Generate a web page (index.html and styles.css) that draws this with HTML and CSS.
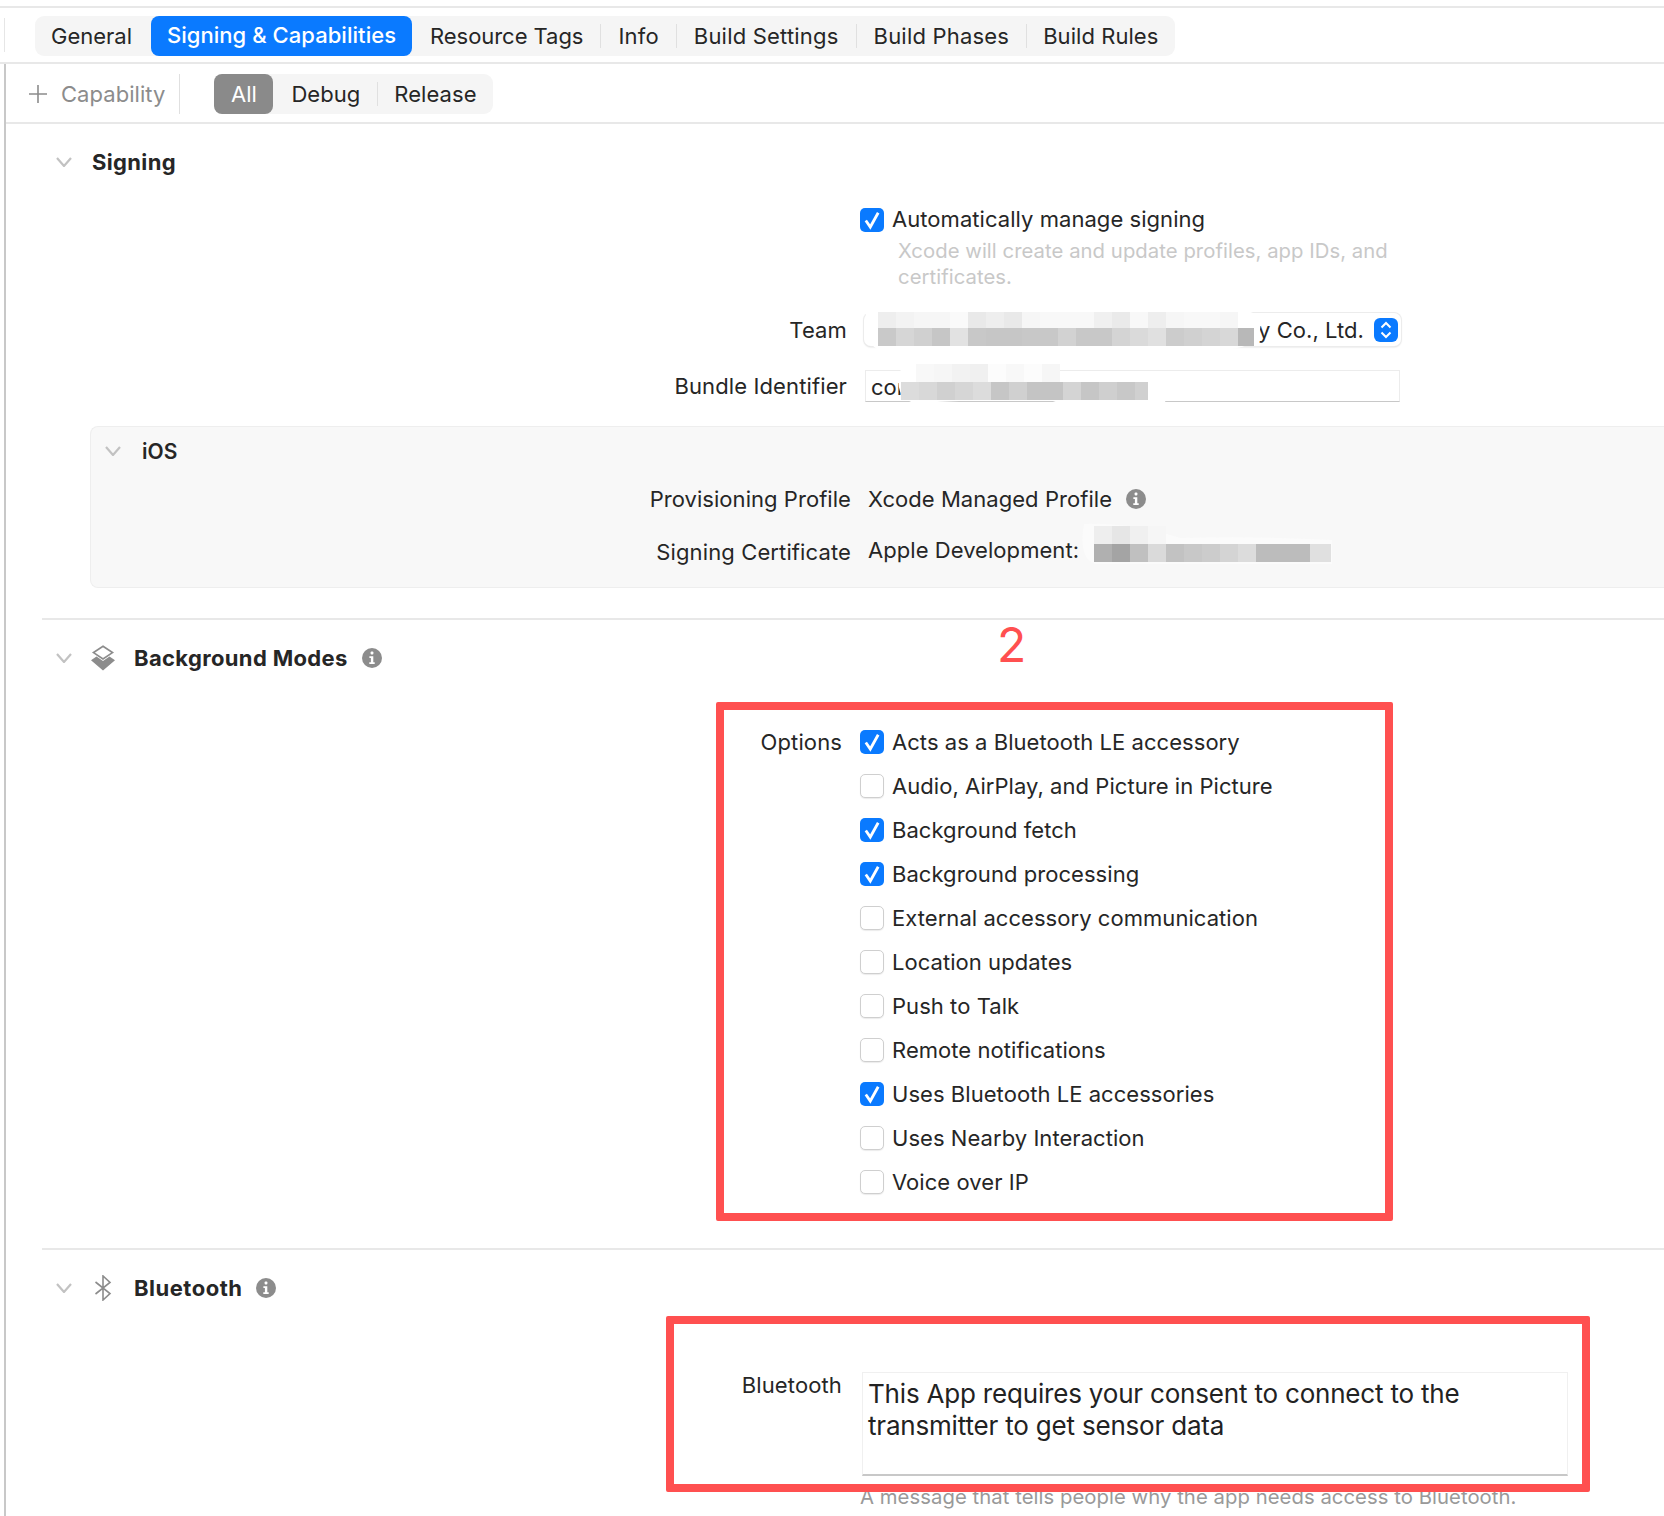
FILE: index.html
```html
<!DOCTYPE html>
<html lang="en">
<head>
<meta charset="utf-8">
<title>Signing &amp; Capabilities</title>
<link rel="stylesheet" href="styles.css">
</head>
<body>
<svg class="defs" width="0" height="0" aria-hidden="true">
  <symbol id="chev" viewBox="0 0 16 10"><polyline points="1,1 8,9 15,1" fill="none" stroke="#c2c2c2" stroke-width="2.200"/></symbol>
  <symbol id="info" viewBox="0 0 20 20"><circle cx="10" cy="10" r="10" fill="#8c8c8c"/><rect x="8.600" y="3.600" width="2.800" height="2.800" rx="1" fill="#fff"/><path d="M7.400 8.200h3.900v6h1.400v1.800H7.300v-1.800h1.600V10H7.400z" fill="#fff"/></symbol>
  <symbol id="tick" viewBox="0 0 24 24"><rect width="24" height="24" rx="5" fill="#0a7aff"/><polyline points="5.800,12.500 10.300,19 18.200,4.800" fill="none" stroke="#fff" stroke-width="2.800"/></symbol>
</svg>
<div class="page">
  <header class="tabrow">
    <i class="rail"></i>
    <nav class="tabs">
      <span class="tab tab-first">General</span>
      <span class="tab tab-on">Signing &amp; Capabilities</span>
      <span class="tab tab-res">Resource Tags</span><i class="sep"></i>
      <span class="tab">Info</span><i class="sep"></i>
      <span class="tab">Build Settings</span><i class="sep"></i>
      <span class="tab">Build Phases</span><i class="sep"></i>
      <span class="tab tab-last">Build Rules</span>
    </nav>
  </header>
  <main class="main">
    <div class="subbar">
      <svg class="plus" width="18" height="18" viewBox="0 0 18 18"><path d="M9 0v18M0 9h18" stroke="#8c8c8c" stroke-width="1.600"/></svg>
      <span class="cap">Capability</span>
      <i class="cap-sep"></i>
      <div class="seg">
        <span class="seg-all">All</span>
        <span class="seg-item seg-debug">Debug</span><i class="sep"></i>
        <span class="seg-item seg-release">Release</span>
      </div>
    </div>

    <section class="signing">
      <div class="head"><svg class="chev" width="16" height="10"><use href="#chev"/></svg><h2 class="title title-plain">Signing</h2></div>
      <div class="row row-auto">
        <span></span>
        <label class="check check-auto"><svg class="box" width="24" height="24"><use href="#tick"/></svg><span>Automatically manage signing</span></label>
      </div>
      <p class="hint">Xcode will create and update profiles, app IDs, and certificates.</p>
      <div class="row row-team">
        <span class="label label-team">Team</span>
        <div class="popup"><span class="popup-text">y Co., Ltd.</span>
          <svg class="stepper" width="24" height="24" viewBox="0 0 24 24"><rect width="24" height="24" rx="6" fill="#0a7aff"/><path d="M7.500 9.500 12 5l4.500 4.500M7.500 14.500 12 19l4.500-4.500" fill="none" stroke="#fff" stroke-width="2"/></svg>
        </div>
      </div>
      <div class="row row-bundle">
        <span class="label">Bundle Identifier</span>
        <div class="field">com</div>
      </div>
      <div class="ios">
        <div class="ios-head"><svg class="chev" width="16" height="10"><use href="#chev"/></svg><h3 class="ios-title">iOS</h3></div>
        <div class="ios-row ios-row-prof">
          <span class="label">Provisioning Profile</span>
          <span class="value">Xcode Managed Profile<svg class="info info-prof" width="20" height="20"><use href="#info"/></svg></span>
        </div>
        <div class="ios-row ios-row-cert">
          <span class="label">Signing Certificate</span>
          <span class="value value-up">Apple Development:</span>
        </div>
      </div>
    </section>

    <hr class="rule rule-bg">

    <section class="modes">
      <div class="head"><svg class="chev" width="16" height="10"><use href="#chev"/></svg>
        <svg class="sec-icon" width="26" height="26" viewBox="0 0 26 26"><path d="M13 1.200 22.500 7.600 13 14 3.500 7.600z" fill="none" stroke="#8c8c8c" stroke-width="1.700"/><path d="M6.500 11.500 13 16 19.500 11.500 25 15.200 13 25.500 1 15.200z" fill="#8c8c8c"/></svg>
        <h2 class="title">Background Modes</h2><svg class="info" width="20" height="20"><use href="#info"/></svg></div>
      <div class="options">
        <div class="row row-opt"><span class="label label-opt">Options</span><label class="check"><svg class="box" width="24" height="24"><use href="#tick"/></svg><span>Acts as a Bluetooth LE accessory</span></label></div>
        <div class="row row-opt"><span></span><label class="check"><i class="box box-off"></i><span>Audio, AirPlay, and Picture in Picture</span></label></div>
        <div class="row row-opt"><span></span><label class="check"><svg class="box" width="24" height="24"><use href="#tick"/></svg><span>Background fetch</span></label></div>
        <div class="row row-opt"><span></span><label class="check"><svg class="box" width="24" height="24"><use href="#tick"/></svg><span>Background processing</span></label></div>
        <div class="row row-opt"><span></span><label class="check"><i class="box box-off"></i><span>External accessory communication</span></label></div>
        <div class="row row-opt"><span></span><label class="check"><i class="box box-off"></i><span>Location updates</span></label></div>
        <div class="row row-opt"><span></span><label class="check"><i class="box box-off"></i><span>Push to Talk</span></label></div>
        <div class="row row-opt"><span></span><label class="check"><i class="box box-off"></i><span>Remote notifications</span></label></div>
        <div class="row row-opt"><span></span><label class="check"><svg class="box" width="24" height="24"><use href="#tick"/></svg><span>Uses Bluetooth LE accessories</span></label></div>
        <div class="row row-opt"><span></span><label class="check"><i class="box box-off"></i><span>Uses Nearby Interaction</span></label></div>
        <div class="row row-opt"><span></span><label class="check"><i class="box box-off"></i><span>Voice over IP</span></label></div>
      </div>
    </section>

    <hr class="rule rule-bt">

    <section class="bluetooth">
      <div class="head"><svg class="chev" width="16" height="10"><use href="#chev"/></svg>
        <svg class="sec-icon sec-icon-bt" width="18" height="26" viewBox="0 0 18 26"><path d="M1.500 7 16 18.500 9 25V1L16 7.500 1.500 19" fill="none" stroke="#8c8c8c" stroke-width="1.600"/></svg>
        <h2 class="title">Bluetooth</h2><svg class="info" width="20" height="20"><use href="#info"/></svg></div>
      <div class="row row-bt">
        <span class="label label-opt">Bluetooth</span>
        <div class="usage">This App requires your consent to connect to the transmitter to get sensor data</div>
      </div>
      <p class="help">A message that tells people why the app needs access to Bluetooth.</p>
    </section>
  </main>

  <svg class="redact" width="1664" height="1516" viewBox="0 0 1664 1516" shape-rendering="crispEdges">
    <g shape-rendering="auto" fill="#fff">
      <path d="M866 310H1240Q1268 312 1258 336Q1250 352 1200 350H880Q864 346 866 310z"/>
      <path d="M902 366Q940 356 1010 360Q1050 372 1105 382Q1170 390 1165 404Q1160 420 1120 416Q1080 412 1050 400Q940 400 920 404Q890 400 902 366z"/>
      <path d="M1084 524Q1130 522 1180 538Q1260 536 1332 540V564H1095Q1078 558 1084 524z" fill="#fbfbfb"/>
    </g>
    <g>
      <rect x="878" y="312" width="18" height="16" fill="#eee"/><rect x="896" y="312" width="18" height="16" fill="#f3f3f3"/><rect x="914" y="312" width="18" height="16" fill="#f6f6f6"/><rect x="932" y="312" width="18" height="16" fill="#f6f6f6"/><rect x="950" y="312" width="18" height="16" fill="#fafafa"/><rect x="968" y="312" width="18" height="16" fill="#e9e9e9"/><rect x="986" y="312" width="18" height="16" fill="#eee"/><rect x="1004" y="312" width="18" height="16" fill="#e9e9e9"/><rect x="1022" y="312" width="18" height="16" fill="#f6f6f6"/><rect x="1040" y="312" width="18" height="16" fill="#f8f8f8"/><rect x="1058" y="312" width="18" height="16" fill="#f8f8f8"/><rect x="1076" y="312" width="18" height="16" fill="#f8f8f8"/><rect x="1094" y="312" width="18" height="16" fill="#f0f0f0"/><rect x="1112" y="312" width="18" height="16" fill="#eaeaea"/><rect x="1130" y="312" width="18" height="16" fill="#f8f8f8"/><rect x="1148" y="312" width="18" height="16" fill="#eee"/><rect x="1166" y="312" width="18" height="16" fill="#f6f6f6"/><rect x="1184" y="312" width="18" height="16" fill="#f8f8f8"/><rect x="1202" y="312" width="18" height="16" fill="#f8f8f8"/><rect x="1220" y="312" width="18" height="16" fill="#f6f6f6"/>
      <rect x="878" y="328" width="18" height="18" fill="#c9c9c9"/><rect x="896" y="328" width="18" height="18" fill="#d6d6d6"/><rect x="914" y="328" width="18" height="18" fill="#d0d0d0"/><rect x="932" y="328" width="18" height="18" fill="#c6c6c6"/><rect x="950" y="328" width="18" height="18" fill="#e2e2e2"/><rect x="968" y="328" width="18" height="18" fill="#c8c8c8"/><rect x="986" y="328" width="18" height="18" fill="#c6c6c6"/><rect x="1004" y="328" width="18" height="18" fill="#c6c6c6"/><rect x="1022" y="328" width="18" height="18" fill="#c8c8c8"/><rect x="1040" y="328" width="18" height="18" fill="#c8c8c8"/><rect x="1058" y="328" width="18" height="18" fill="#d2d2d2"/><rect x="1076" y="328" width="18" height="18" fill="#c8c8c8"/><rect x="1094" y="328" width="18" height="18" fill="#c8c8c8"/><rect x="1112" y="328" width="18" height="18" fill="#d4d4d4"/><rect x="1130" y="328" width="18" height="18" fill="#dadada"/><rect x="1148" y="328" width="18" height="18" fill="#e0e0e0"/><rect x="1166" y="328" width="18" height="18" fill="#ccc"/><rect x="1184" y="328" width="18" height="18" fill="#d0d0d0"/><rect x="1202" y="328" width="18" height="18" fill="#d4d4d4"/><rect x="1220" y="328" width="18" height="18" fill="#d8d8d8"/><rect x="1238" y="328" width="16" height="18" fill="#b8b8b8"/>
      <rect x="916" y="364" width="18" height="18" fill="#f8f8f8"/><rect x="934" y="364" width="18" height="18" fill="#f6f6f6"/><rect x="952" y="364" width="18" height="18" fill="#f2f2f2"/><rect x="970" y="364" width="18" height="18" fill="#f0f0f0"/><rect x="988" y="364" width="18" height="18" fill="#fcfcfc"/><rect x="1006" y="364" width="18" height="18" fill="#f8f8f8"/><rect x="1024" y="364" width="18" height="18" fill="#fcfcfc"/><rect x="1042" y="364" width="18" height="18" fill="#f6f6f6"/>
      <rect x="901" y="382" width="18" height="18" fill="#dcdcdc"/><rect x="919" y="382" width="18" height="18" fill="#d8d8d8"/><rect x="937" y="382" width="18" height="18" fill="#d0d0d0"/><rect x="955" y="382" width="18" height="18" fill="#d6d6d6"/><rect x="973" y="382" width="18" height="18" fill="#dcdcdc"/><rect x="991" y="382" width="18" height="18" fill="#c6c6c6"/><rect x="1009" y="382" width="18" height="18" fill="#d0d0d0"/><rect x="1027" y="382" width="18" height="18" fill="#c4c4c4"/><rect x="1045" y="382" width="18" height="18" fill="#c4c4c4"/><rect x="1063" y="382" width="18" height="18" fill="#d4d4d4"/><rect x="1081" y="382" width="18" height="18" fill="#c6c6c6"/><rect x="1099" y="382" width="18" height="18" fill="#cfcfcf"/><rect x="1117" y="382" width="18" height="18" fill="#c8c8c8"/><rect x="1135" y="382" width="13" height="18" fill="#d0d0d0"/>
      <rect x="1094" y="526" width="18" height="18" fill="#eee"/><rect x="1112" y="526" width="18" height="18" fill="#e6e6e6"/><rect x="1130" y="526" width="18" height="18" fill="#f0f0f0"/><rect x="1148" y="526" width="18" height="18" fill="#f6f6f6"/>
      <rect x="1094" y="544" width="18" height="18" fill="#b0b0b0"/><rect x="1112" y="544" width="18" height="18" fill="#a4a4a4"/><rect x="1130" y="544" width="18" height="18" fill="#c0c0c0"/><rect x="1148" y="544" width="18" height="18" fill="#dadada"/><rect x="1166" y="544" width="18" height="18" fill="#c2c2c2"/><rect x="1184" y="544" width="18" height="18" fill="#c8c8c8"/><rect x="1202" y="544" width="18" height="18" fill="#ccc"/><rect x="1220" y="544" width="18" height="18" fill="#d4d4d4"/><rect x="1238" y="544" width="18" height="18" fill="#dcdcdc"/><rect x="1256" y="544" width="18" height="18" fill="#bcbcbc"/><rect x="1274" y="544" width="18" height="18" fill="#bcbcbc"/><rect x="1292" y="544" width="18" height="18" fill="#bcbcbc"/><rect x="1310" y="544" width="21" height="18" fill="#e0e0e0"/>
    </g>
  </svg>
  <span class="step-num">2</span>
  <div class="mark mark-options"></div>
  <div class="mark mark-bluetooth"></div>
</div>
</body>
</html>
```

FILE: styles.css
```css
* { box-sizing: border-box; }
html, body { margin: 0; padding: 0; background: #fff; }
body { font-family: Inter, "Liberation Sans", sans-serif; font-size: 22px; color: #262626; letter-spacing: .05px; }
.defs { position: absolute; }
.page { position: relative; width: 1664px; height: 1516px; overflow: hidden; }

.tabrow { margin-top: 6px; height: 58px; border-top: 2px solid #e8e8e8; border-bottom: 2px solid #e8e8e8; padding: 8px 0 0 4px; display: flex; align-items: flex-start; }
.rail { width: 1px; height: 34px; margin: 2px 30px 0 0; background: #e6e6e6; flex: none; }
.tabs { display: inline-flex; align-items: center; height: 40px; background: #f5f5f5; border-radius: 9px; }
.tab { padding: 0 17px; white-space: nowrap; letter-spacing: .2px; }
.tab-first { padding: 0 19px 0 16px; letter-spacing: 0; }
.tab-on { width: 261px; height: 40px; line-height: 38px; padding: 0; text-align: center; background: #0a7aff; color: #fff; border-radius: 8px; font-weight: 500; letter-spacing: .05px; }
.tab-res { padding-left: 18px; letter-spacing: -.05px; }
.tab-last { padding-left: 16px; letter-spacing: .05px; }
.sep { display: block; width: 1px; height: 24px; background: #e0e0e0; flex: none; }

.main { margin-left: 4px; padding-left: 1px; border-left: 2px solid #c8c8c8; height: 1452px; }
.subbar { height: 60px; margin-left: -1px; padding-left: 1px; border-bottom: 2px solid #e8e8e8; display: flex; align-items: flex-start; padding-top: 10px; }
.plus { margin: 11px 0 0 22px; flex: none; }
.cap { margin-left: 14px; line-height: 40px; color: #8c8c8c; }
.cap-sep { width: 1px; height: 40px; background: #e0e0e0; margin-left: 14px; }
.seg { display: flex; align-items: center; height: 40px; margin-left: 34px; background: #f5f5f5; border-radius: 9px; padding-right: 16px; }
.seg-all { width: 59px; height: 40px; line-height: 40px; text-align: center; background: #8a8a8a; color: #fff; border-radius: 8px; }
.seg-item { white-space: nowrap; }
.seg-debug { padding: 0 17px 0 18px; }
.seg-release { padding-left: 16px; }

.signing { padding-top: 18px; }
.head { display: flex; align-items: center; height: 40px; padding-left: 49px; }
.chev { flex: none; }
.title { margin: 0 0 0 18px; font-size: 22px; font-weight: 700; white-space: nowrap; letter-spacing: .35px; }
.title-plain { margin-left: 20px; }
.sec-icon { margin-left: 18px; flex: none; }
.sec-icon-bt { margin: 0 22px 0 22px; }
.sec-icon-bt + .title { margin-left: 0; letter-spacing: .5px; }
.info { margin-left: 14px; flex: none; }

.row { display: grid; grid-template-columns: 840px 1fr; column-gap: 18px; align-items: center; }
.label { text-align: right; white-space: nowrap; letter-spacing: .12px; }
.check { display: flex; align-items: center; gap: 8px; margin-left: -5px; white-space: nowrap; }
.check-auto { height: 24px; align-items: flex-start; }
.check-auto span { line-height: 23px; }
.box { display: block; width: 24px; height: 24px; flex: none; }
.box-off { background: #fff; border: 1px solid #cfcfcf; border-radius: 5px; box-shadow: 0 1px 1px rgba(0,0,0,.08); }

.row-auto { height: 24px; margin-top: 26px; }
.hint { margin: 6px 0 0 891px; width: 500px; height: 26px; font-size: 20.3px; line-height: 26px; color: #c8c8c8; }
.row-team { height: 33px; margin-top: 49px; }
.label-team { padding-right: 0; }
.popup { position: relative; margin-left: -1px; width: 537px; height: 33px; background: #fff; border-radius: 7px; box-shadow: 0 0 0 1px #ececec, 0 1px 2px rgba(0,0,0,.2); display: flex; align-items: center; justify-content: flex-end; padding-right: 3px; }
.popup-text { margin-right: 10px; }
.stepper { display: block; }
.row-bundle { height: 32px; margin-top: 24px; }
.field { width: 535px; height: 32px; line-height: 32px; padding-left: 5px; background: #fff; border: 1px solid #ececec; border-bottom: 1px solid #c8c8c8; overflow: hidden; }

.ios { margin: 24px 0 0 83px; height: 162px; background: #f8f8f8; border: 1px solid #eeeeee; border-right: 0; border-radius: 8px 0 0 8px; }
.ios-head { display: flex; align-items: center; height: 48px; padding-left: 14px; }
.ios-title { margin: 0 0 0 21px; font-size: 21px; font-weight: 600; }
.ios-row { display: grid; grid-template-columns: 760px 1fr; column-gap: 17px; align-items: center; height: 32px; }
.ios-row-prof { margin-top: 8px; }
.ios-row-prof .label { letter-spacing: .05px; }
.ios-row-cert { margin-top: 21px; }
.value { display: flex; align-items: center; white-space: nowrap; }
.value-up { margin-bottom: 4px; }
.info-prof { margin-left: 14px; }

.rule { height: 2px; margin: 0 0 0 35px; border: 0; background: #e8e8e8; }
.rule-bg { margin-top: 30px; }
.modes { padding-top: 18px; }
.options { margin-top: 42px; }
.row-opt { height: 44px; }
.label-opt { padding-right: 5px; }
.rule-bt { margin-top: 44px; }
.bluetooth { padding-top: 18px; }
.row-bt { margin-top: 64px; align-items: start; }
.row-bt .label { line-height: 26px; }
.usage { margin-left: -3px; width: 706px; height: 104px; padding: 5px 6px 0 5px; font-size: 26px; letter-spacing: -.19px; line-height: 32px; color: #222; background: #fff; border: 1px solid #f0f0f0; border-bottom: 2px solid #c8c8c8; }
.help { margin: 8px 0 0 853px; font-size: 20.3px; line-height: 26px; color: #999; white-space: nowrap; }

.redact { position: absolute; left: 0; top: 0; pointer-events: none; }
.step-num { position: absolute; left: 997px; top: 616px; font-size: 48px; line-height: 58px; color: #ff5050; }
.mark { position: absolute; border: 8px solid #ff5050; border-radius: 2px; }
.mark-options { left: 716px; top: 702px; width: 677px; height: 519px; }
.mark-bluetooth { left: 666px; top: 1316px; width: 924px; height: 176px; }
```
